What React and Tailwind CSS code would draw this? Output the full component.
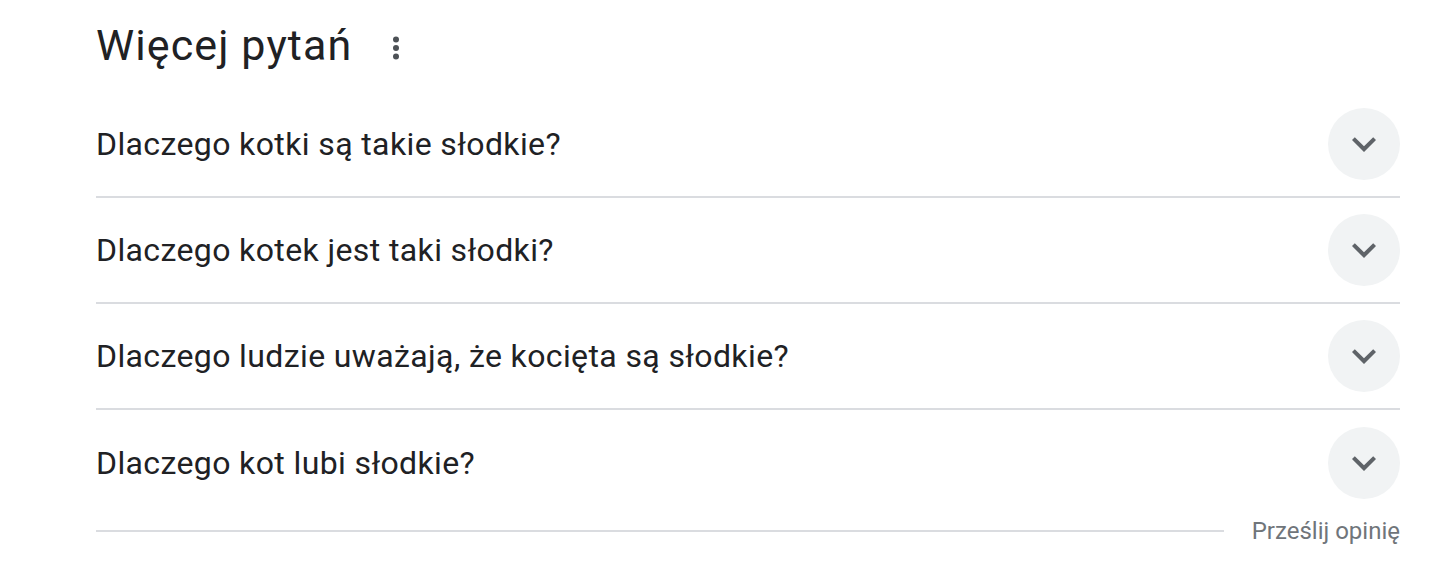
import React from "react";

const questions = [
  "Dlaczego kotki są takie słodkie?",
  "Dlaczego kotek jest taki słodki?",
  "Dlaczego ludzie uważają, że kocięta są słodkie?",
  "Dlaczego kot lubi słodkie?",
];

function ChevronDown() {
  return (
    <svg width="48" height="48" viewBox="0 0 24 24" fill="#5f6368">
      <path d="M16.59 8.59L12 13.17 7.41 8.59 6 10l6 6 6-6z" />
    </svg>
  );
}

function MoreVert() {
  return (
    <svg width="48" height="48" viewBox="0 0 24 24" fill="#4d5156">
      <circle cx="12" cy="7.8" r="1.5" />
      <circle cx="12" cy="12" r="1.5" />
      <circle cx="12" cy="16.2" r="1.5" />
    </svg>
  );
}

export default function App() {
  return (
    <div
      className="w-[1442px] h-[568px] bg-white pl-[96px] pr-[42px]"
      style={{ fontFamily: "Roboto, 'Noto Sans', sans-serif" }}
    >
      {/* Header */}
      <div className="h-[92px] flex items-center">
        <h2 className="text-[43px] leading-[48px] tracking-[1.1px] text-[#202124] -mt-[2px]">Więcej pytań</h2>
        <div className="ml-[20px] mt-[4px]">
          <MoreVert />
        </div>
      </div>

      {/* Questions */}
      <div>
        {questions.map((q, i) => (
          <div
            key={q}
            className={`h-[106px] flex items-center justify-between ${
              i < questions.length - 1 ? "border-b-2 border-[#dadce0]" : ""
            }`}
          >
            <span className="text-[32px] tracking-[0.38px] text-[#202124]">{q}</span>
            <div className="w-[72px] h-[72px] rounded-full bg-[#f1f3f4] flex items-center justify-center">
              <ChevronDown />
            </div>
          </div>
        ))}
      </div>

      {/* Footer */}
      <div className="flex items-center h-[30px]">
        <div className="flex-1 h-[2px] bg-[#dadce0]" />
        <span className="ml-[28px] text-[24px] text-[#70757a]">Prześlij opinię</span>
      </div>
    </div>
  );
}
